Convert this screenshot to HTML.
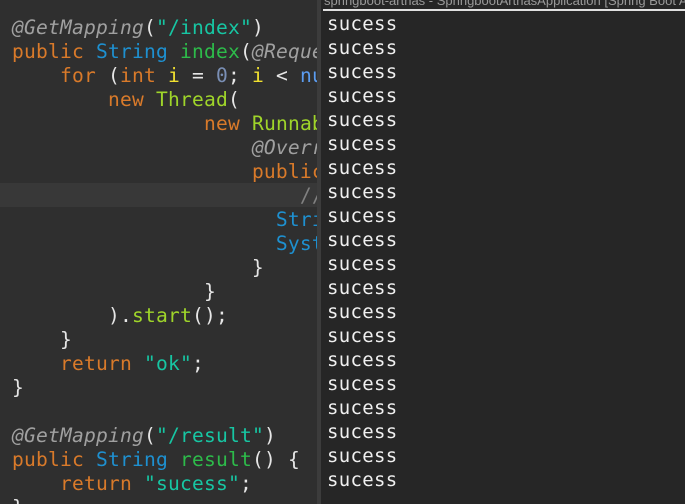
<!DOCTYPE html>
<html><head><meta charset="utf-8"><style>
body{margin:0;width:685px;height:504px;overflow:hidden;background:#2b2b2b;position:relative;font-family:"DejaVu Sans Mono","Liberation Mono",monospace}
#ed{position:absolute;left:0;top:0;width:317px;height:504px;background:#2f2f2f;overflow:hidden}
#hl{position:absolute;left:0;top:183px;width:317px;height:24px;background:#383838}
.l{position:absolute;left:12px;height:24px;line-height:24px;font-size:19.6px;white-space:pre;color:#e6e6e6;letter-spacing:0.2px;margin-top:1px}
.a{color:#a0a0a0;font-style:italic}.k{color:#d97a2a}.t{color:#1e90d0}.f{color:#2dbb4a}.s{color:#17c6a3}.y{color:#f0e030}.c{color:#7a8fb5}.g{color:#9fd52a}.n{color:#5b9cf0}.cm{color:#808080}
#div{position:absolute;left:317px;top:0;width:4px;height:504px;background:#3c3c3c}
#con{position:absolute;left:321px;top:0;width:364px;height:504px;background:#262626;overflow:hidden}
#ti{position:absolute;left:3px;top:-7px;font-family:"Liberation Sans",sans-serif;font-size:13px;color:#9a9a9a;white-space:nowrap}
#ln{position:absolute;left:2px;top:9px;width:362px;height:2px;background:#e0e0e0}
.o{position:absolute;left:6px;height:24px;line-height:24px;font-size:19px;color:#f0f0f0;letter-spacing:0.3px;margin-top:1px}
</style></head><body>
<div id="ed"><div id="hl"></div>
<div class="l" style="top:15px"><span class="a">@GetMapping</span>(<span class="s">"/index"</span>)</div>
<div class="l" style="top:39px"><span class="k">public</span> <span class="t">String</span> <span class="f">index</span>(<span class="a">@RequestParam</span></div>
<div class="l" style="top:63px">    <span class="k">for</span> (<span class="k">int</span> <span class="y">i</span> = <span class="c">0</span>; <span class="y">i</span> &lt; <span class="n">num</span></div>
<div class="l" style="top:87px">        <span class="k">new</span> <span class="g">Thread</span>(</div>
<div class="l" style="top:111px">                <span class="k">new</span> <span class="g">Runnable</span></div>
<div class="l" style="top:135px">                    <span class="a">@Override</span></div>
<div class="l" style="top:159px">                    <span class="k">public</span></div>
<div class="l" style="top:183px">                        <span class="cm">//</span></div>
<div class="l" style="top:207px">                      <span class="t">String</span></div>
<div class="l" style="top:231px">                      <span class="t">System</span></div>
<div class="l" style="top:255px">                    }</div>
<div class="l" style="top:279px">                }</div>
<div class="l" style="top:303px">        ).<span class="g">start</span>();</div>
<div class="l" style="top:327px">    }</div>
<div class="l" style="top:351px">    <span class="k">return</span> <span class="s">"ok"</span>;</div>
<div class="l" style="top:375px">}</div>
<div class="l" style="top:423px"><span class="a">@GetMapping</span>(<span class="s">"/result"</span>)</div>
<div class="l" style="top:447px"><span class="k">public</span> <span class="t">String</span> <span class="f">result</span>() {</div>
<div class="l" style="top:471px">    <span class="k">return</span> <span class="s">"sucess"</span>;</div>
<div class="l" style="top:495px">}</div>
</div>
<div id="div"></div>
<div id="con"><div id="ti">springboot-arthas - SpringbootArthasApplication [Spring Boot App]</div><div id="ln"></div>
<div class="o" style="top:11px">sucess</div><div class="o" style="top:35px">sucess</div><div class="o" style="top:59px">sucess</div><div class="o" style="top:83px">sucess</div><div class="o" style="top:107px">sucess</div><div class="o" style="top:131px">sucess</div><div class="o" style="top:155px">sucess</div><div class="o" style="top:179px">sucess</div><div class="o" style="top:203px">sucess</div><div class="o" style="top:227px">sucess</div><div class="o" style="top:251px">sucess</div><div class="o" style="top:275px">sucess</div><div class="o" style="top:299px">sucess</div><div class="o" style="top:323px">sucess</div><div class="o" style="top:347px">sucess</div><div class="o" style="top:371px">sucess</div><div class="o" style="top:395px">sucess</div><div class="o" style="top:419px">sucess</div><div class="o" style="top:443px">sucess</div><div class="o" style="top:467px">sucess</div>
</div>
</body></html>
